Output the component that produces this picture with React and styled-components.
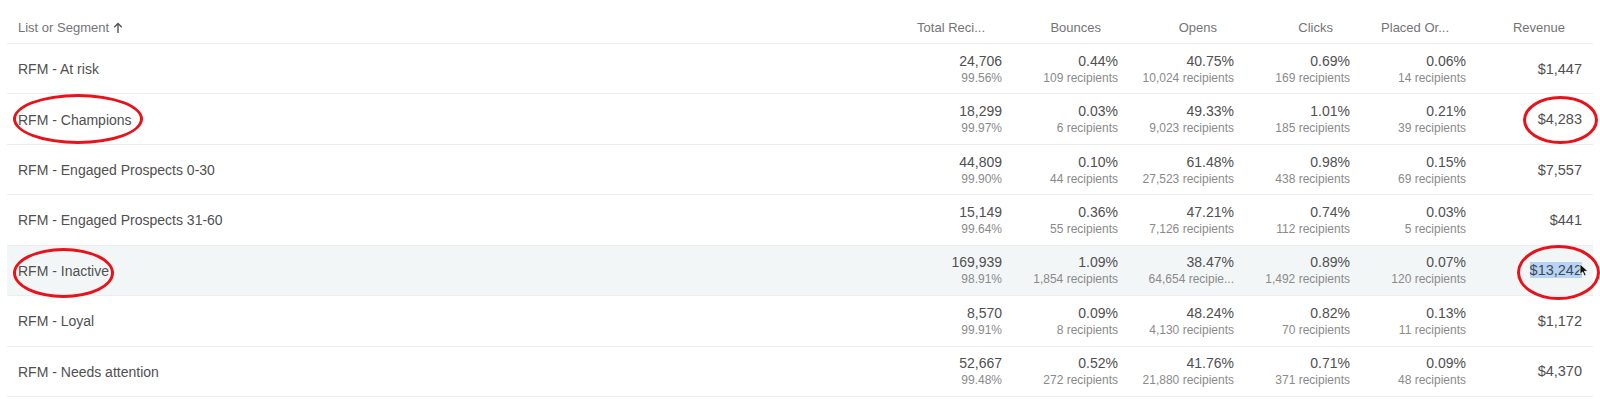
import React from "react";
import styled, { createGlobalStyle } from "styled-components";

const rows = [
  { name: "RFM - At risk", total: ["24,706", "99.56%"], bounces: ["0.44%", "109 recipients"], opens: ["40.75%", "10,024 recipients"], clicks: ["0.69%", "169 recipients"], orders: ["0.06%", "14 recipients"], revenue: "$1,447" },
  { name: "RFM - Champions", circled: true, total: ["18,299", "99.97%"], bounces: ["0.03%", "6 recipients"], opens: ["49.33%", "9,023 recipients"], clicks: ["1.01%", "185 recipients"], orders: ["0.21%", "39 recipients"], revenue: "$4,283" },
  { name: "RFM - Engaged Prospects 0-30", total: ["44,809", "99.90%"], bounces: ["0.10%", "44 recipients"], opens: ["61.48%", "27,523 recipients"], clicks: ["0.98%", "438 recipients"], orders: ["0.15%", "69 recipients"], revenue: "$7,557" },
  { name: "RFM - Engaged Prospects 31-60", total: ["15,149", "99.64%"], bounces: ["0.36%", "55 recipients"], opens: ["47.21%", "7,126 recipients"], clicks: ["0.74%", "112 recipients"], orders: ["0.03%", "5 recipients"], revenue: "$441" },
  { name: "RFM - Inactive", circled: true, hovered: true, selected: true, total: ["169,939", "98.91%"], bounces: ["1.09%", "1,854 recipients"], opens: ["38.47%", "64,654 recipie..."], clicks: ["0.89%", "1,492 recipients"], orders: ["0.07%", "120 recipients"], revenue: "$13,242" },
  { name: "RFM - Loyal", total: ["8,570", "99.91%"], bounces: ["0.09%", "8 recipients"], opens: ["48.24%", "4,130 recipients"], clicks: ["0.82%", "70 recipients"], orders: ["0.13%", "11 recipients"], revenue: "$1,172" },
  { name: "RFM - Needs attention", total: ["52,667", "99.48%"], bounces: ["0.52%", "272 recipients"], opens: ["41.76%", "21,880 recipients"], clicks: ["0.71%", "371 recipients"], orders: ["0.09%", "48 recipients"], revenue: "$4,370" },
];

const columns = ["Total Reci...", "Bounces", "Opens", "Clicks", "Placed Or...", "Revenue"];

const App = () => {
  return (
    <>
      <GlobalStyle />
      <Table>
        <HeaderRow>
          <HeaderCell>
            List or Segment
            <SortArrow viewBox="0 0 10 12">
              <path d="M5 11V1.5M1.2 5.2L5 1.4l3.8 3.8" fill="none" stroke="#555" strokeWidth="1.4" />
            </SortArrow>
          </HeaderCell>
          {columns.map(c => (
            <HeaderCell key={c} numeric>{c}</HeaderCell>
          ))}
        </HeaderRow>
        {rows.map(r => (
          <Row key={r.name} hovered={r.hovered}>
            <NameCell>
              {r.name}
              {r.circled && <Ellipse style={r.hovered ? { left: 6, top: 2, width: 101, height: 50 } : { left: 6, top: 0, width: 130, height: 50 }} />}
            </NameCell>
            {[r.total, r.bounces, r.opens, r.clicks, r.orders].map((m, i) => (
              <MetricCell key={i}>
                <Value>{m[0]}</Value>
                <Sub>{m[1]}</Sub>
              </MetricCell>
            ))}
            <MetricCell>
              {r.selected ? (
                <Value revenue>
                  <Selected>{r.revenue}</Selected>
                  <Cursor viewBox="0 0 10 14">
                    <path d="M1 1v10.5l2.6-2.5 1.8 4 1.8-.8-1.8-3.9H9z" fill="#111" stroke="#fff" strokeWidth="0.8" />
                  </Cursor>
                </Value>
              ) : (
                <Value revenue>{r.revenue}</Value>
              )}
              {r.circled && <Ellipse style={r.hovered ? { left: 40, top: -1, width: 83, height: 55 } : { left: 46, top: 2, width: 75, height: 48 }} />}
            </MetricCell>
          </Row>
        ))}
      </Table>
    </>
  );
};

const GlobalStyle = createGlobalStyle`
  body {
    margin: 0;
    background: #fff;
    font-family: "Liberation Sans", Arial, sans-serif;
  }
`;

const Table = styled.div`
  width: 1600px;
  padding: 0 7px;
  box-sizing: border-box;
`;

const HeaderRow = styled.div`
  display: grid;
  grid-template-columns: 890px repeat(6, 116px);
  height: 44px;
  align-items: end;
  border-bottom: 1px solid #ededed;
  box-sizing: border-box;
`;

const HeaderCell = styled.div`
  display: flex;
  align-items: center;
  justify-content: ${p => (p.numeric ? "flex-end" : "flex-start")};
  padding: ${p => (p.numeric ? "0 28px 0 0" : "0 0 0 11px")};
  padding-bottom: 7px;
  font-size: 13px;
  line-height: 16px;
  color: #747474;
  white-space: nowrap;
`;

const SortArrow = styled.svg`
  width: 10px;
  height: 12px;
  margin-left: 4px;
`;

const Row = styled.div`
  display: grid;
  grid-template-columns: 890px repeat(6, 116px);
  height: 50.43px;
  box-sizing: border-box;
  border-bottom: 1px solid #ededed;
  background: ${p => (p.hovered ? "#f3f6f7" : "#fff")};
`;

const NameCell = styled.div`
  position: relative;
  display: flex;
  align-items: center;
  padding-left: 11px;
  padding-top: 1px;
  font-size: 14px;
  color: #505050;
`;

const MetricCell = styled.div`
  position: relative;
  display: flex;
  flex-direction: column;
  align-items: flex-end;
  justify-content: center;
  padding-right: 11px;
  white-space: nowrap;
`;

const Value = styled.div`
  position: relative;
  font-size: ${p => (p.revenue ? "14.5px" : "14px")};
  line-height: 18px;
  color: #505050;
`;

const Sub = styled.div`
  font-size: 12px;
  line-height: 16px;
  color: #8a8a8a;
`;

const Selected = styled.span`
  background: #b9d3f3;
  color: #3b4a5c;
`;

const Cursor = styled.svg`
  position: absolute;
  right: -7px;
  top: 2px;
  width: 10px;
  height: 14px;
`;

const Ellipse = styled.span`
  position: absolute;
  border: 3.5px solid #e8121b;
  border-radius: 50%;
  box-sizing: border-box;
  pointer-events: none;
`;

export default App;
